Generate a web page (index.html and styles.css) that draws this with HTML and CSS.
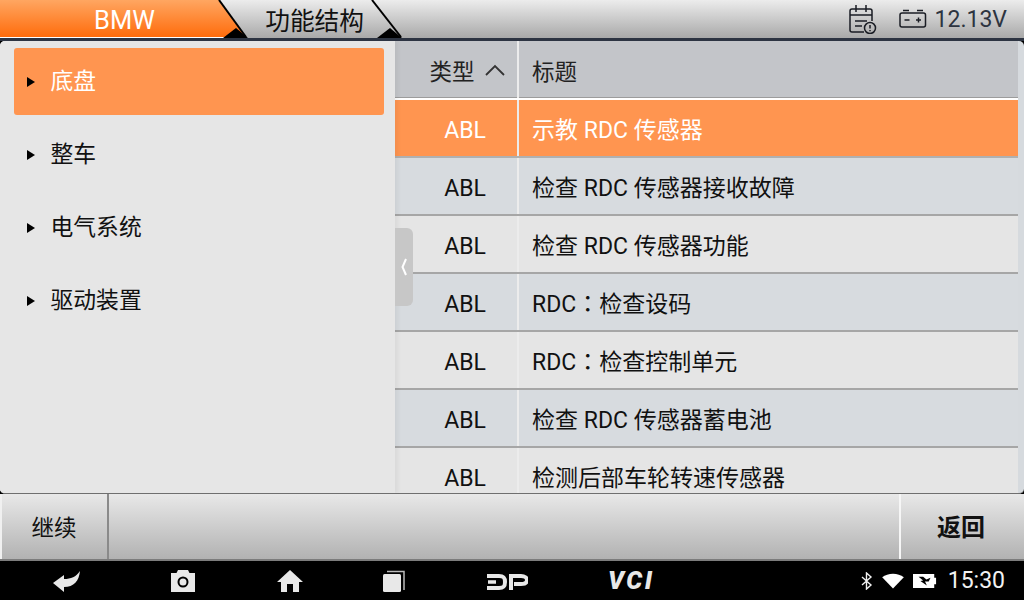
FILE: index.html
```html
<!DOCTYPE html>
<html lang="zh">
<head>
<meta charset="utf-8">
<title>BMW 功能结构</title>
<link rel="stylesheet" href="styles.css">
</head>
<body>
<div class="app">
  <header class="topbar">
    <div class="crumb crumb-first">BMW</div>
    <div class="crumb crumb-second">功能结构</div>
    <svg class="crumb-arrows" width="410" height="38" viewBox="0 0 410 38">
      <path d="M223 38L236 28L248 38Z" fill="#000"/>
      <path d="M219 0L246 37" stroke="#000" stroke-width="2" fill="none"/>
      <path d="M377 38L390 28L402 38Z" fill="#000"/>
      <path d="M372 0L401 37" stroke="#000" stroke-width="2" fill="none"/>
    </svg>
    <div class="status">
      <svg class="ico-report" width="28" height="30" viewBox="0 0 28 30" fill="none" stroke="#1a1d24" stroke-width="1.5">
        <path d="M15 28H3a2 2 0 0 1-2-2V7a2 2 0 0 1 2-2h18a2 2 0 0 1 2 2v10"/>
        <path d="M1 11H23M7 1V8M17 1V8M6 17H18M6 22H13"/>
        <circle cx="21" cy="24" r="5.500"/>
        <path d="M21 21V24.500M21 26V27.200"/>
      </svg>
      <svg class="ico-batt" width="28" height="20" viewBox="0 0 28 20" fill="none" stroke="#1a1d24" stroke-width="1.500">
        <rect x="1" y="4" width="25.500" height="14" rx="2"/>
        <path d="M4 1.500H10M18 1.500H24M5.500 11H10.500M17 11H22M19.500 8.500V13.500"/>
      </svg>
      <span class="volt">12.13V</span>
    </div>
  </header>
  <div class="rule"></div>

  <main class="content">
    <div class="table">
      <div class="thead">
        <div class="cell c1 type-head"><span>类型</span>
          <svg width="20" height="12" viewBox="0 0 20 12" fill="none" stroke="#333" stroke-width="1.800"><path d="M1 11L10 2L19 11"/></svg>
        </div>
        <div class="cell c2">标题</div>
      </div>
      <div class="row sel"><div class="cell c1"><span class="abl">ABL</span></div><div class="cell c2">示教 RDC 传感器</div></div>
      <div class="row alt"><div class="cell c1"><span class="abl">ABL</span></div><div class="cell c2">检查 RDC 传感器接收故障</div></div>
      <div class="row"><div class="cell c1"><span class="abl">ABL</span></div><div class="cell c2">检查 RDC 传感器功能</div></div>
      <div class="row alt"><div class="cell c1"><span class="abl">ABL</span></div><div class="cell c2"><span>RDC<span class="colon" lang="zh-Hant">：</span>检查设码</span></div></div>
      <div class="row"><div class="cell c1"><span class="abl">ABL</span></div><div class="cell c2"><span>RDC<span class="colon" lang="zh-Hant">：</span>检查控制单元</span></div></div>
      <div class="row alt"><div class="cell c1"><span class="abl">ABL</span></div><div class="cell c2">检查 RDC 传感器蓄电池</div></div>
      <div class="row"><div class="cell c1"><span class="abl">ABL</span></div><div class="cell c2">检测后部车轮转速传感器</div></div>
    </div>

    <aside class="drawer">
      <div class="menu-item active"><i class="tri"></i><span class="menu-label">底盘</span></div>
      <div class="menu-item"><i class="tri"></i><span class="menu-label">整车</span></div>
      <div class="menu-item"><i class="tri"></i><span class="menu-label">电气系统</span></div>
      <div class="menu-item"><i class="tri"></i><span class="menu-label">驱动装置</span></div>
    </aside>
    <div class="handle">
      <svg width="8" height="18" viewBox="0 0 8 18" fill="none" stroke="#fff" stroke-width="2"><path d="M6 1L2.500 9L6 17"/></svg>
    </div>
  </main>

  <div class="actions">
    <div class="btn btn-left">继续</div>
    <div class="btn-fill"></div>
    <div class="btn btn-right">返回</div>
  </div>

  <nav class="navbar">
    <svg class="nav-back" width="30" height="24" viewBox="0 0 30 24"><path d="M1 13L12 5V9C19 9 24 7 28 1C27 11 22 17 12 17V22Z" fill="#e8e8e8"/></svg>
    <svg class="nav-cam" width="26" height="24" viewBox="0 0 26 24"><path fill-rule="evenodd" d="M8 1H18L19.500 4H25V23H1V4H6.500ZM13 7.500A5.500 5.500 0 1 0 13 18.500A5.500 5.500 0 1 0 13 7.500ZM13 9.500A3.500 3.500 0 1 1 13 16.500A3.500 3.500 0 1 1 13 9.500Z" fill="#e8e8e8"/></svg>
    <svg class="nav-home" width="26" height="24" viewBox="0 0 26 24"><path d="M13 1L26 13H22V23H16V15H10V23H4V13H0Z" fill="#e8e8e8"/></svg>
    <svg class="nav-recent" width="24" height="24" viewBox="0 0 24 24"><rect x="1" y="5" width="18" height="18" rx="1.500" fill="#e8e8e8"/><path d="M5 2.500H22V21" fill="none" stroke="#bbb" stroke-width="1.500"/></svg>
    <svg class="nav-dp" width="41" height="18" viewBox="0 0 41 18" fill="none" stroke="#e8e8e8" stroke-width="4"><path d="M0 3H12C17 3 18 5 18 9C18 13 17 15 12 15H0"/><path d="M1 9H9" stroke-width="3.500"/><path d="M24 17V3H34C38 3 40 5 40 7C40 10 38 11 34 11H27"/></svg>
    <span class="nav-vci">VCI</span>
    <div class="sys">
      <svg width="12" height="18" viewBox="0 0 12 18" fill="none" stroke="#f2f2f2" stroke-width="1.400"><path d="M1 5L10 13L5.500 17V1L10 5L1 13"/></svg>
      <svg class="wifi" width="22" height="16" viewBox="0 0 23 17"><path d="M11.500 16.500L0 4.500C6 -0.500 17 -0.500 23 4.500Z" fill="#fff"/></svg>
      <svg class="batt" width="24" height="14" viewBox="0 0 26 15"><path fill-rule="evenodd" d="M0 0H23V4H25V11H23V15H0ZM6 3L11 7L8 7.500L15 12.500L13 8L17 8L19 4L14.500 6L11 3Z" fill="#fff"/></svg>
      <span class="clock">15:30</span>
    </div>
  </nav>
</div>
</body>
</html>
```

FILE: styles.css
```css
* { box-sizing: border-box; }
html, body { margin: 0; padding: 0; background: #000; }
body { font-family: Roboto, "Noto Sans CJK SC", "Noto Sans", sans-serif; }

.app {
  width: 1024px;
  height: 600px;
  display: flex;
  flex-direction: column;
  overflow: hidden;
  background: #000;
}

/* top bar */
.topbar {
  height: 38px;
  display: flex;
  position: relative;
  background: linear-gradient(#ececec, #a9a9a9);
}
.crumb { height: 38px; display: flex; align-items: center; justify-content: center; }
.crumb-first {
  width: 246px;
  padding-left: 3px;
  padding-top: 3px;
  color: #fff;
  font-size: 25.500px;
  background: linear-gradient(#ffa661, #ff6c0c);
  clip-path: polygon(0 0, 219px 0, 246px 38px, 0 38px);
  border-bottom: 1px solid #fff;
}
.crumb-second {
  width: 150px;
  margin-left: -7px;
  color: #111;
  font-size: 24.700px;
  font-family: "Noto Sans CJK SC", sans-serif;
  padding-right: 25px;
  justify-content: flex-end;
}
.crumb-arrows { position: absolute; left: 0; top: 0; }
.status { margin-left: auto; display: flex; align-items: center; padding-right: 17px; }
.ico-report { margin-right: 22px; }
.ico-batt { margin-right: 8px; }
.volt { font-size: 23px; color: #2d3440; padding-top: 1px; }

.rule { height: 3px; background: #2d3442; }

/* content */
.content {
  height: 453px;
  position: relative;
  overflow: hidden;
  background: #d6dade;
  border-bottom: 1px solid #6f6f6f;
  border-radius: 5px;
}
.table { width: 1018px; }
.thead, .row { display: flex; height: 58px; }
.thead {
  height: 59px;
  background: #c3c5c9;
  border-bottom: 2px solid #fff;
  box-shadow: inset 0 -1px 0 #9c9c9c;
  padding-left: 395px;
}
.row {
  padding-left: 395px;
  background: #e5e5e5;
  border-bottom: 2px solid #a6a6a6;
  font-size: 23px;
  color: #111;
}
.row.alt { background: #d7dbdf; }
.row.sel { background: #ff9550; color: #fff; border-bottom-color: #b0b0b0; }
.cell { display: flex; align-items: center; font-size: 23px; color: inherit; }
.thead .cell { color: #222; font-size: 22.500px; }
.c1 {
  width: 124px;
  padding-left: 18px;
  justify-content: center;
  border-right: 2px solid #ececec;
}
.c2 { padding-left: 13px; flex: 1; white-space: nowrap; }
.abl { position: relative; top: 2px; }
.colon { font-family: "Noto Sans CJK TC", sans-serif; }
.type-head { gap: 10px; padding-left: 22px; font-family: "Noto Sans CJK SC", sans-serif; }

.drawer {
  position: absolute;
  left: 0; top: 0; bottom: 0;
  width: 395px;
  background: #e6e6e6;
  padding: 7px 11px 0 14px;
  box-shadow: 3px 0 4px rgba(0,0,0,.05);
}
.menu-item {
  height: 67px;
  margin-bottom: 6px;
  display: flex;
  align-items: center;
  font-size: 22.800px;
  font-family: "Noto Sans CJK SC", sans-serif;
  color: #111;
  border-radius: 3px;
}
.menu-item.active { background: #ff9550; color: #fff; }
.menu-label { margin-bottom: 4px; }
.tri {
  width: 0; height: 0;
  margin: 0 15.500px 0 13px;
  border-left: 8px solid #000;
  border-top: 5.500px solid transparent;
  border-bottom: 5.500px solid transparent;
}
.handle {
  position: absolute;
  left: 395px; top: 187px;
  width: 18px; height: 78px;
  background: #c7c7c7;
  border-radius: 0 6px 6px 0;
  display: flex;
  align-items: center;
  justify-content: center;
}

/* actions */
.actions {
  height: 67px;
  display: flex;
  background: linear-gradient(#e8e8e8, #b2b2b2);
  border-bottom: 2px solid #7c7c7c;
}
.btn { display: flex; align-items: center; justify-content: center; color: #111; }
.btn-left {
  width: 109px;
  font-size: 22.500px;
  font-family: "Noto Sans CJK SC", sans-serif;
  border-left: 2px solid #f0f0f0;
  border-right: 2px solid #8a8a8a;
  padding-bottom: 2px;
  padding-right: 1px;
}
.btn-fill { flex: 1; }
.btn-right {
  width: 125px;
  font-size: 24px;
  font-weight: 700;
  font-family: "Noto Sans CJK SC", sans-serif;
  padding-bottom: 2px;
  padding-right: 3px;
  border-left: 2px solid #f6f6f6;
}

/* android nav */
.navbar {
  flex: 1;
  background: #000;
  display: flex;
  align-items: center;
  padding-left: 52px;
  color: #e8e8e8;
}
.nav-back { margin-right: 88px; margin-top: 2px; }
.nav-cam { margin-right: 81px; }
.nav-home { margin-right: 79px; }
.nav-recent { margin-right: 81px; }
.nav-dp { margin-right: 80px; margin-top: 2px; }
.nav-vci {
  font-size: 25px;
  font-weight: 900;
  font-style: italic;
  letter-spacing: 2.500px;
  color: #e8e8e8;
}
.sys { margin-left: auto; display: flex; align-items: center; padding-right: 19px; }
.wifi { margin: 0 9px 0 9px; }
.batt { margin-right: 11px; }
.clock { font-size: 23px; color: #f2f2f2; }
```
